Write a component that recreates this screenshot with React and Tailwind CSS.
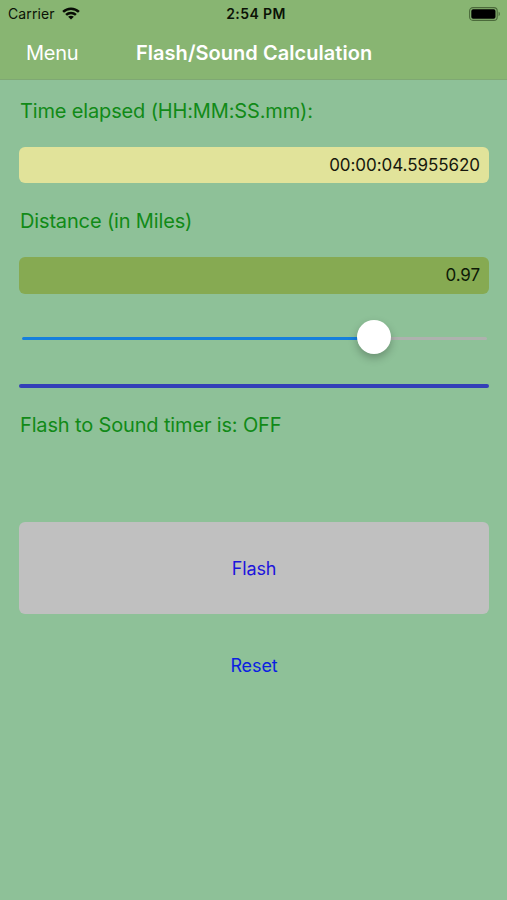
function WifiIcon() {
  return (
    <svg viewBox="0 0 18 13" className="w-[18px] h-[13px]" fill="none" stroke="#080c05" strokeWidth="2.5">
      <path d="M1.1 4.9C5.5 0.6 12.5 0.6 16.9 4.9" />
      <path d="M4.1 7.9C6.8 5.3 11.2 5.3 13.9 7.9" />
      <path d="M9 12.6L6.1 9.8C7.8 8.3 10.2 8.3 11.9 9.8Z" fill="#080c05" stroke="none" />
    </svg>
  );
}

function BatteryIcon() {
  return (
    <svg viewBox="0 0 32 14" className="w-8 h-3.5">
      <rect x="0.6" y="0.6" width="27.6" height="12.8" rx="3.4" fill="none" stroke="#4b6a3b" strokeWidth="1.1" />
      <rect x="2.3" y="2.3" width="24.2" height="9.4" rx="1.8" fill="#000" />
      <path d="M29.6 4.8C31.2 5.4 31.2 8.6 29.6 9.2Z" fill="#4b6a3b" />
    </svg>
  );
}

function StatusBar() {
  return (
    <div className="grid grid-cols-3 items-center h-[27px] pl-2 pr-[6px] text-[#0b1206]">
      <div className="flex items-center gap-[7px]">
        <span className="text-sm tracking-[0.1px]">Carrier</span>
        <WifiIcon />
      </div>
      <span className="text-sm font-semibold text-center tracking-[0.4px] pl-[3px]">2:54 PM</span>
      <div className="flex justify-end">
        <BatteryIcon />
      </div>
    </div>
  );
}

function Label({ children }) {
  return (
    <p className="h-[26px] pl-px leading-[26px] text-xl tracking-[-0.15px] text-[#118a17] whitespace-nowrap">
      {children}
    </p>
  );
}

function Slider({ value }) {
  return (
    <div className="relative flex items-center h-[34px] ml-[3px] mr-[2px]">
      <div className="flex w-full h-[3px] mt-[3px] rounded-full bg-[#aeb2ae] overflow-hidden">
        <div className="bg-[#1580dc]" style={{ width: `${value}%` }} />
      </div>
      <div
        className="absolute top-0 size-[34px] -ml-[17px] rounded-full bg-white shadow-[0_4px_8px_rgba(0,0,0,0.25)]"
        style={{ left: `${value}%` }}
      />
    </div>
  );
}

export default function App() {
  return (
    <div className="w-full h-[900px] bg-[#8ec198] font-['Inter',sans-serif] overflow-hidden">
      <header className="h-20 bg-[#88b572] border-b border-[#7fa873]">
        <StatusBar />
        <nav className="flex items-center h-[51px] text-xl text-white">
          <button className="ml-[26px] w-[110px] text-left tracking-[-0.3px]">Menu</button>
          <h1 className="font-semibold tracking-[0.04px] whitespace-nowrap">Flash/Sound Calculation</h1>
        </nav>
      </header>

      <main className="flex flex-col pl-[19px] pr-[18px] pt-[18px]">
        <Label>Time elapsed (HH:MM:SS.mm):</Label>
        <div className="flex items-center justify-end h-9 mt-[23px] pt-px pr-[9px] rounded-md bg-[#e1e39a] text-[17px] tracking-[-0.05px] text-[#16170c]">
          00:00:04.5955620
        </div>

        <div className="mt-[25px]">
          <Label>Distance (in Miles)</Label>
        </div>
        <div className="flex items-center justify-end h-[37px] mt-[23px] pr-[9px] rounded-md bg-[#86aa52] text-[17px] tracking-[-0.1px] text-[#0d1906]">
          0.97
        </div>

        <div className="mt-[26px]">
          <Slider value={75.8} />
        </div>

        <div className="h-1 mt-[30px] rounded-sm bg-[#343fb8]" />

        <div className="mt-6">
          <Label>Flash to Sound timer is: OFF</Label>
        </div>

        <button className="h-[92px] mt-[84px] pt-[2px] rounded-md bg-[#c0c0c0] text-lg tracking-[-0.15px] text-[#1d15dc]">
          Flash
        </button>
        <button className="self-center h-8 mt-9 text-lg tracking-[-0.1px] text-[#0c1fe0]">Reset</button>
      </main>
    </div>
  );
}
